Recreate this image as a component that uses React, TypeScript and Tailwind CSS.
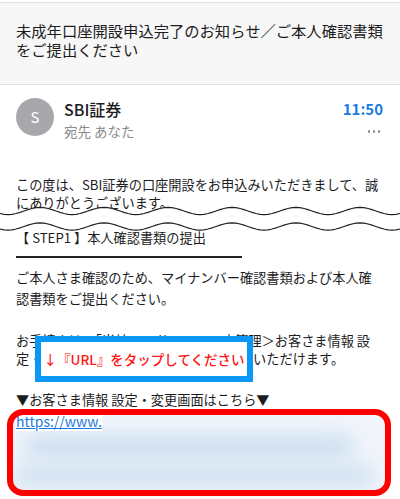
import React from 'react';

// sine wave drawn across the page width, used for the "cut" mark
function wavePoints(y: number, amp: number, period: number, phase: number) {
  const pts: [number, number][] = [];
  for (let x = 0; x <= 400; x += 4) {
    pts.push([x, y + amp * Math.sin(((x + phase) / period) * 2 * Math.PI)]);
  }
  return pts;
}

function CutMark() {
  const top = wavePoints(7, 3.6, 64, 8);
  const bottom = wavePoints(22.5, 3.6, 64, 8);
  const line = (p: [number, number][]) => p.map(([x, y], i) => `${i ? 'L' : 'M'}${x} ${y.toFixed(2)}`).join(' ');
  const fill = line(top) + ' ' + [...bottom].reverse().map(([x, y]) => `L${x} ${y.toFixed(2)}`).join(' ') + ' Z';
  return (
    <svg className="-mx-4 -mt-[8px] block h-[27px] w-[400px] relative" viewBox="0 0 400 27">
      <path d={fill} fill="#fff" />
      <path d={line(top)} fill="none" stroke="#222" strokeWidth="1.1" />
      <path d={line(bottom)} fill="none" stroke="#222" strokeWidth="1.1" />
    </svg>
  );
}

export default function App() {
  return (
    <div className="h-[499px] w-[400px] overflow-hidden bg-white text-[#1c1c1e] font-['Noto_Sans_CJK_JP',sans-serif]">
      <div className="mt-[2px] h-[83px] border-y border-[#e0e0e0] bg-[#f7f7f7] pl-4 pr-[14px] pt-[18px] text-[15.3px] leading-[19px]">
        未成年口座開設申込完了のお知らせ／ご本人確認書類をご提出ください
      </div>

      <div className="flex items-start gap-[10px] pl-4 pr-[17px] pt-[13px]">
        <div className="flex h-[38px] w-[38px] shrink-0 items-center justify-center rounded-full bg-[#a7a7ac] text-[15px] text-white">
          S
        </div>
        <div className="flex-1">
          <div className="text-[16px] font-medium leading-[22px]">SBI証券</div>
          <div className="text-[13.5px] leading-[22px] text-[#8a8a8e]">宛先 あなた</div>
        </div>
        <div className="flex flex-col items-end">
          <div className="text-[15px] font-bold leading-[22px] text-[#1c7ce0]">11:50</div>
          <div className="mt-[10px] mr-[3px] flex gap-[2.5px]">
            <span className="h-[2.5px] w-[2.5px] rounded-full bg-[#8e8e93]" />
            <span className="h-[2.5px] w-[2.5px] rounded-full bg-[#8e8e93]" />
            <span className="h-[2.5px] w-[2.5px] rounded-full bg-[#8e8e93]" />
          </div>
        </div>
      </div>

      <div className="pl-4 pr-[6px] text-[13.2px]">
        <p className="mt-[34px] leading-[18px]">
          この度は、SBI証券の口座開設をお申込みいただきまして、誠<br />
          にありがとうございます。
        </p>
        <CutMark />
        <p className="-mt-[2px] leading-[18px]">【 STEP1 】本人確認書類の提出</p>
        <div className="mt-[9px] h-[2px] w-[226px] bg-[#222]" />

        <p className="mt-[9px] leading-[21px]">
          ご本人さま確認のため、マイナンバー確認書類および本人確<br />
          認書類をご提出ください。
        </p>

        <div className="relative mt-[23px]">
          <p className="leading-[18px]">
            お手続きは、「当社WEBサイト＞口座管理＞お客さま情報 設<br />
            定・変更」画面より書類をアップロードいただけます。
          </p>
          <div className="absolute left-[19px] top-[4px] flex h-[46px] w-[218px] items-center justify-center border-[6px] border-[#0a98f6] bg-white text-[13.5px] font-medium text-[#ff1414]">
            ↓『URL』をタップしてください
          </div>
        </div>

        <p className="mt-[23px] leading-[18px]">▼お客さま情報 設定・変更画面はこちら▼</p>

        <div className="relative -ml-[9px] mr-[3px] h-[87px]">
          <div className="absolute inset-[6px] overflow-hidden rounded-[10px] bg-[#f2f6fb]">
            <div className="absolute left-[10px] right-[30px] top-[20px] h-[22px] rounded-full bg-[#c9ddf0] blur-[10px]" />
            <div className="absolute left-[0px] right-[10px] top-[50px] h-[22px] rounded-full bg-[#cfe0f1] blur-[10px]" />
          </div>
          <div className="relative z-10 pl-[9px] pt-[2px]">
            <span className="bg-white text-[14px] leading-[20px] text-[#1e78dc] underline">https://www.</span>
          </div>
          <div className="absolute inset-0 z-20 rounded-[16px] border-[6px] border-[#ff0000]" />
        </div>
      </div>
    </div>
  );
}
